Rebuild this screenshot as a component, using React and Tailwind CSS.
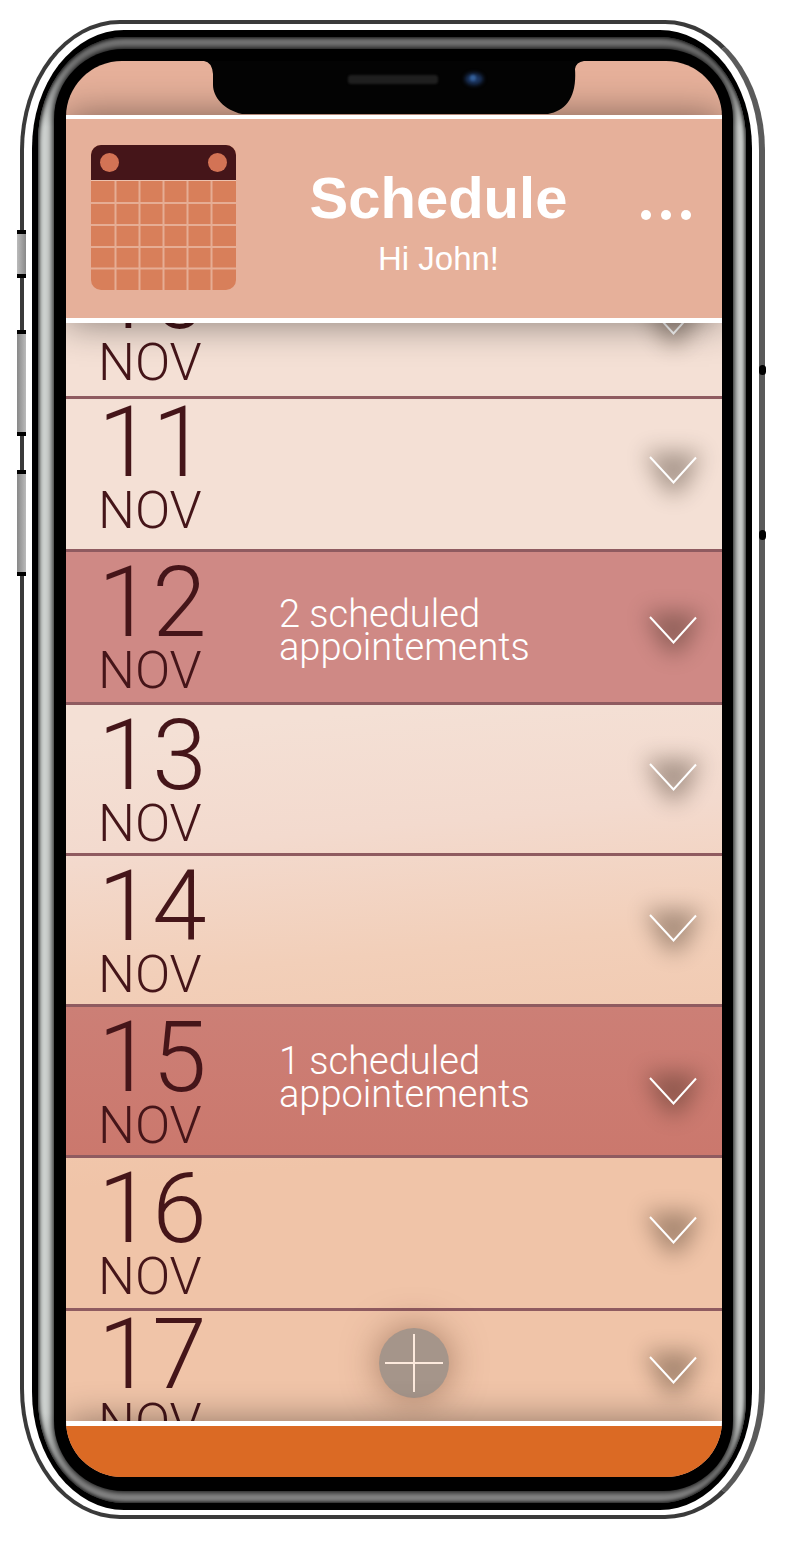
const days = [
  { day: 10, row: 'h-[76px] items-end overflow-hidden border-b-3 pb-[15px]', chevron: 'mb-[46px]' },
  { day: 11, row: 'h-[153px] items-start border-b-3 pt-2', chevron: 'mt-[49px]' },
  { day: 12, row: 'h-[153px] items-start border-b-3 pt-[15px] bg-[#cf8985]', chevron: 'mt-[49px]', count: 2, note: 'mt-[31px]' },
  { day: 13, row: 'h-[151px] items-start border-b-3 pt-[15px]', chevron: 'mt-[43px]' },
  { day: 14, row: 'h-[151px] items-start border-b-3 pt-[15px]', chevron: 'mt-[43px]' },
  { day: 15, row: 'h-[151px] items-start border-b-3 pt-[15px] bg-linear-to-b from-[#cc7f76] to-[#cb786d]', chevron: 'mt-[55px]', count: 1, note: 'mt-[23px]' },
  { day: 16, row: 'h-[153px] items-start border-b-3 pt-[15px]', chevron: 'mt-[43px]' },
  { day: 17, row: 'h-[110px] items-start overflow-hidden pt-2', chevron: 'mt-[37px]' },
];

function Chevron() {
  return (
    <svg width="48" height="28" viewBox="0 0 48 28" className="block overflow-visible" aria-hidden="true">
      <path d="M-4 -4H52L38 30L25 40L12 30Z" fill="#281c10" opacity="0.36" className="blur-[11px]" />
      <path d="M1 1L24.500 26.500L47 1.500" fill="none" stroke="#fff" strokeWidth="2" />
    </svg>
  );
}

function CalendarIcon() {
  return (
    <svg width="145" height="145" viewBox="0 0 145 145" className="block shrink-0" role="img" aria-label="Calendar">
      <rect width="145" height="145" rx="10" fill="#d87f5a" />
      <path d="M0 36V10A10 10 0 0 1 10 0H135A10 10 0 0 1 145 10V36Z" fill="#451519" />
      <circle cx="18.500" cy="17.500" r="9.500" fill="#d37355" />
      <circle cx="126.500" cy="17.500" r="9.500" fill="#d37355" />
      <path d="M0 35.500H145" stroke="#edc1ad" strokeWidth="1" />
      <path
        d="M24.500 36V145M48.500 36V145M72.500 36V145M96.500 36V145M120.500 36V145M0 58H145M0 80H145M0 102H145M0 123.500H145"
        stroke="#f3d3c4"
        strokeOpacity="0.55"
        strokeWidth="2"
      />
    </svg>
  );
}

function Notch() {
  return (
    <svg width="380" height="53" viewBox="0 0 380 53" className="relative z-20 block shrink-0" aria-hidden="true">
      <path d="M0 0H380Q372 1 371 8C373 36 362 50 344 53H38C20 49 9 36 9 24V13Q8 1 0 0Z" fill="#030303" />
      <rect x="144" y="14" width="90" height="9" rx="3" fill="#1f1f1f" className="blur-[1px]" />
      <ellipse cx="270" cy="18" rx="9" ry="6" fill="#1d3763" className="blur-[2px]" />
      <circle cx="269" cy="17" r="3" fill="#34619b" className="blur-[1px]" />
    </svg>
  );
}

function DayRow({ item }) {
  return (
    <li className={`flex shrink-0 border-[#8f5b60] pr-[25px] pl-8 ${item.row}`}>
      <time className="flex w-[181px] shrink-0 flex-col gap-[14px] text-[#451519]">
        <span className="text-[98px] leading-[72px]">{item.day}</span>
        <span className="text-[52px] leading-9">NOV</span>
      </time>
      <p className={`min-w-0 flex-1 text-[38px] leading-[33px] text-white ${item.note ?? ''}`}>
        {item.count && (
          <>
            {item.count} scheduled
            <br />
            appointements
          </>
        )}
      </p>
      <button type="button" aria-label={`Show ${item.day} November`} className={`shrink-0 ${item.chevron}`}>
        <Chevron />
      </button>
    </li>
  );
}

function Screen() {
  return (
    <main className="overflow-hidden rounded-[56px] bg-[#e6b09a]">
      <div className="flex h-[54px] items-start justify-center">
        <Notch />
      </div>
      <header className="relative z-10 flex items-start border-t-4 border-b-5 border-white bg-[#e6b09a] pt-[26px] pr-[31px] pb-7 pl-[25px] text-white shadow-[0_0_36px_rgba(0,0,0,0.46)]">
        <CalendarIcon />
        <div className="mt-6 flex flex-1 flex-col items-center gap-4 font-['Liberation_Sans',Arial,sans-serif]">
          <h1 className="text-[58px] leading-[58px] font-bold">Schedule</h1>
          <p className="text-[33px] leading-8">Hi John!</p>
        </div>
        <button type="button" aria-label="More options" className="mt-[65px] flex shrink-0 gap-[10px]">
          <span className="size-[10px] rounded-full bg-white" />
          <span className="size-[10px] rounded-full bg-white" />
          <span className="size-[10px] rounded-full bg-white" />
        </button>
      </header>
      <section className="relative">
        <ul className="flex flex-col bg-[linear-gradient(175deg,#f4e0d5_0%,#f4e0d5_36%,#f3dace_46%,#f2cfb9_57%,#f0c4a8_75%,#f0c4a8_100%)] font-['Roboto',sans-serif] font-light">
          {days.map((item) => (
            <DayRow key={item.day} item={item} />
          ))}
        </ul>
        <button
          type="button"
          aria-label="Add appointment"
          className="absolute bottom-[23px] left-[53%] -translate-x-1/2 rounded-full bg-[#a5958a] shadow-[0_0_36px_rgba(90,50,30,0.5)]"
        >
          <svg width="70" height="70" viewBox="0 0 70 70" className="block" aria-hidden="true">
            <path d="M6 35H64M35 6V64" stroke="#fdeadd" strokeWidth="2" />
          </svg>
        </button>
      </section>
      <footer className="relative z-10 h-14 border-t-5 border-white bg-[#db6a24] shadow-[0_0_36px_rgba(0,0,0,0.42)]" />
    </main>
  );
}

export default function App() {
  return (
    <div className="bg-white pt-5 pr-9 pb-[22px] pl-5">
      <div className="relative rounded-[100px/130px] border-4 border-r-[6px] border-[#3a3a3a] border-r-[#5a5a5a] pt-[6px] pr-[7px] pb-[5px] pl-2">
        <span className="absolute top-[206px] -left-[7px] h-12 w-[9px] border-y-4 border-black bg-linear-to-r from-[#bbb] to-[#888]" />
        <span className="absolute top-[306px] -left-[7px] h-[106px] w-[9px] border-y-4 border-black bg-linear-to-r from-[#888] to-[#bbb]" />
        <span className="absolute top-[446px] -left-[7px] h-[106px] w-[9px] border-y-4 border-black bg-linear-to-r from-[#888] to-[#bbb]" />
        <span className="absolute top-[341px] -right-[7px] h-[10px] w-[7px] rounded-full bg-black" />
        <span className="absolute top-[506px] -right-[7px] h-[10px] w-[7px] rounded-full bg-black" />
        <div className="rounded-[92px/118px] bg-black px-[6px] py-[7px]">
          <div className="rounded-[86px/104px] bg-[linear-gradient(#777_0px,#777_20px,#ccd0ce_90px,#ccd0ce_calc(100%-90px),#888_calc(100%-20px))] pt-3 pr-[13px] pb-3 pl-4 shadow-[inset_0_0_4px_1px_#000]">
            <div className="rounded-[70px] bg-black pt-3 pr-[11px] pb-[14px] pl-3 shadow-[0_0_6px_1px_#000]">
              <Screen />
            </div>
          </div>
        </div>
      </div>
    </div>
  );
}
